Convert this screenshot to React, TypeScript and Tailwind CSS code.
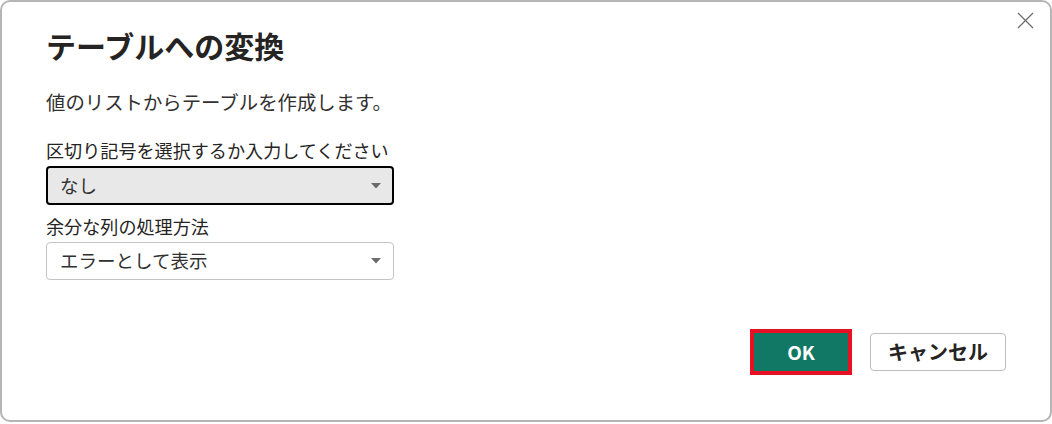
import React from 'react';

const Caret: React.FC = () => (
  <svg width="10" height="6" viewBox="0 0 10 6" className="shrink-0">
    <path d="M0 0 L10 0 L5 5.5 Z" fill="#6b6b6b" />
  </svg>
);

const App: React.FC = () => {
  return (
    <div
      className="w-[1052px] h-[422px] bg-white border-2 border-[#b5b5b5] rounded-[10px] relative text-[#252423]"
      style={{ fontFamily: '"Noto Sans CJK JP", "Noto Sans", sans-serif' }}
    >
      {/* close button */}
      <button className="absolute top-[9px] right-[15px] w-[19px] h-[19px] flex items-center justify-center" aria-label="閉じる">
        <svg width="17" height="17" viewBox="0 0 17 17">
          <path d="M1 1 L16 16 M16 1 L1 16" stroke="#6e6e6e" strokeWidth="1.3" />
        </svg>
      </button>

      <div className="pl-[44px] pr-[44px] pt-[22px]">
        <h1 className="text-[30px] font-bold leading-[42px]">テーブルへの変換</h1>
        <p className="mt-[23px] text-[19.4px] leading-[26px] text-[#323130]">値のリストからテーブルを作成します。</p>

        <label className="block mt-[22px] text-[18.1px] leading-[26px]">区切り記号を選択するか入力してください</label>
        <div className="mt-[3px] w-[348px] h-[39px] bg-[#e8e8e8] border-2 border-black rounded-[4px] flex items-center justify-between pl-[12px] pr-[11px]">
          <span className="text-[18.5px] text-[#323130]">なし</span>
          <Caret />
        </div>

        <label className="block mt-[8px] text-[18.1px] leading-[26px]">余分な列の処理方法</label>
        <div className="mt-[3px] w-[348px] h-[38px] bg-white border border-[#c4c4c4] rounded-[4px] flex items-center justify-between pl-[13px] pr-[12px]">
          <span className="text-[18.5px] text-[#323130]">エラーとして表示</span>
          <Caret />
        </div>

        <div className="mt-[49px] flex items-center justify-end gap-[18px]">
          <button className="w-[102px] h-[46px] border-4 border-[#e81123] bg-[#117865] text-white font-bold text-[19px] flex items-center justify-center">
            OK
          </button>
          <button className="w-[136px] h-[38px] bg-white border border-[#bdbdbd] rounded-[4px] font-bold text-[20px] text-[#252423] flex items-center justify-center">
            キャンセル
          </button>
        </div>
      </div>
    </div>
  );
};

export default App;
